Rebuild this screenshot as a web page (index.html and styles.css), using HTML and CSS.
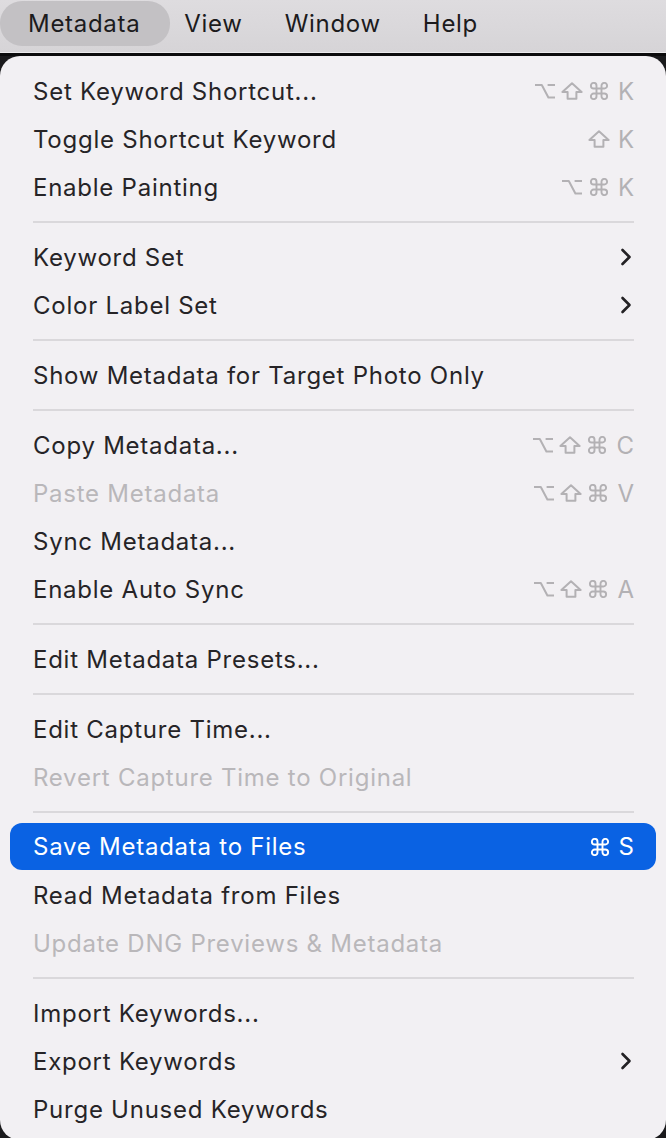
FILE: index.html
```html
<!DOCTYPE html>
<html>
<head>
<meta charset="utf-8">
<link rel="stylesheet" href="styles.css">
</head>
<body>
<svg width="0" height="0" class="defs">
  <defs>
    <symbol id="opt" viewBox="0 0 22 18"><path d="M1 3 H7.8 L14.4 15.5 H21 M13.6 3 H21" fill="none" stroke="currentColor" stroke-width="2" stroke-linejoin="round"/></symbol>
    <symbol id="shift" viewBox="0 0 22 18"><path d="M11 1.2 L20.6 10 H15.4 V16.8 H6.6 V10 H1.4 Z" fill="none" stroke="currentColor" stroke-width="2" stroke-linejoin="round"/></symbol>
    <symbol id="cmd" viewBox="0 0 22 18"><path d="M8.5 6.5 V3.7 A2.8 2.8 0 1 0 5.7 6.5 H16.3 A2.8 2.8 0 1 0 13.5 3.7 V14.3 A2.8 2.8 0 1 0 16.3 11.5 H5.7 A2.8 2.8 0 1 0 8.5 14.3 Z" fill="none" stroke="currentColor" stroke-width="1.9" stroke-linejoin="round"/></symbol>
    <symbol id="chev" viewBox="0 0 12 18"><path d="M2.5 2 L9.5 9 L2.5 16" fill="none" stroke="currentColor" stroke-width="2.6" stroke-linecap="round" stroke-linejoin="round"/></symbol>
  </defs>
</svg>
<div class="menubar">
  <span class="mb-item active">Metadata</span>
  <span class="mb-item">View</span>
  <span class="mb-item">Window</span>
  <span class="mb-item">Help</span>
</div>
<div class="gap"></div>
<div class="panel">
  <div class="row"><span class="label">Set Keyword Shortcut...</span><span class="keys"><svg class="g"><use href="#opt"/></svg><svg class="g"><use href="#shift"/></svg><svg class="g"><use href="#cmd"/></svg><span class="k">K</span></span></div>
  <div class="row"><span class="label">Toggle Shortcut Keyword</span><span class="keys"><svg class="g"><use href="#shift"/></svg><span class="k">K</span></span></div>
  <div class="row"><span class="label">Enable Painting</span><span class="keys"><svg class="g"><use href="#opt"/></svg><svg class="g"><use href="#cmd"/></svg><span class="k">K</span></span></div>
  <div class="sep"></div>
  <div class="row"><span class="label">Keyword Set</span><svg class="chev"><use href="#chev"/></svg></div>
  <div class="row"><span class="label">Color Label Set</span><svg class="chev"><use href="#chev"/></svg></div>
  <div class="sep"></div>
  <div class="row"><span class="label">Show Metadata for Target Photo Only</span></div>
  <div class="sep"></div>
  <div class="row"><span class="label">Copy Metadata...</span><span class="keys"><svg class="g"><use href="#opt"/></svg><svg class="g"><use href="#shift"/></svg><svg class="g"><use href="#cmd"/></svg><span class="k">C</span></span></div>
  <div class="row disabled"><span class="label">Paste Metadata</span><span class="keys"><svg class="g"><use href="#opt"/></svg><svg class="g"><use href="#shift"/></svg><svg class="g"><use href="#cmd"/></svg><span class="k">V</span></span></div>
  <div class="row"><span class="label">Sync Metadata...</span></div>
  <div class="row"><span class="label">Enable Auto Sync</span><span class="keys"><svg class="g"><use href="#opt"/></svg><svg class="g"><use href="#shift"/></svg><svg class="g"><use href="#cmd"/></svg><span class="k">A</span></span></div>
  <div class="sep"></div>
  <div class="row"><span class="label">Edit Metadata Presets...</span></div>
  <div class="sep"></div>
  <div class="row"><span class="label">Edit Capture Time...</span></div>
  <div class="row disabled"><span class="label">Revert Capture Time to Original</span></div>
  <div class="sep"></div>
  <div class="row selected"><span class="label">Save Metadata to Files</span><span class="keys"><svg class="g"><use href="#cmd"/></svg><span class="k">S</span></span></div>
  <div class="row"><span class="label">Read Metadata from Files</span></div>
  <div class="row disabled"><span class="label">Update DNG Previews &amp; Metadata</span></div>
  <div class="sep"></div>
  <div class="row"><span class="label">Import Keywords...</span></div>
  <div class="row"><span class="label">Export Keywords</span><svg class="chev"><use href="#chev"/></svg></div>
  <div class="row"><span class="label">Purge Unused Keywords</span></div>
</div>
</body>
</html>
```

FILE: styles.css
```css
html, body {
  margin: 0;
  padding: 0;
}
body {
  width: 666px;
  height: 1138px;
  overflow: hidden;
  background: #1a1a1c;
  font-family: Inter, "Noto Sans", "Liberation Sans", sans-serif;
  -webkit-font-smoothing: antialiased;
}
.defs {
  position: absolute;
  width: 0;
  height: 0;
}
.menubar {
  height: 53px;
  background: linear-gradient(#dedcdf, #d6d4d7);
  display: flex;
  align-items: flex-start;
  padding-top: 1px;
  border-bottom: 1px solid #ecebed;
  box-sizing: border-box;
}
.mb-item {
  font-size: 24px;
  color: #1c1b1d;
  padding: 0 21px;
  height: 45px;
  line-height: 45px;
  letter-spacing: 0.7px;
}
.mb-item.active {
  background: #c3c1c4;
  border-radius: 22px;
  padding: 0 30px 0 28px;
  margin-right: -7px;
}
.gap {
  height: 3px;
  background: #0b0b0c;
}
.panel {
  background: #f2f0f3;
  border-radius: 20px;
  padding: 11px 10px 8px 10px;
  height: 1084px;
  box-sizing: border-box;
}
.row {
  height: 48px;
  display: flex;
  align-items: center;
  justify-content: space-between;
  padding: 0 22px 0 23px;
  border-radius: 12px;
  font-size: 24px;
  letter-spacing: 0.75px;
  color: #262427;
}
.row.disabled {
  color: #b9b7ba;
}
.row.selected {
  background: #0a62e3;
  color: #ffffff;
  height: 47px;
  margin-bottom: 1px;
}
.label {
  white-space: nowrap;
}
.keys {
  display: flex;
  align-items: center;
  gap: 5px;
  color: #b3b1b4;
  font-size: 24px;
}
.row.selected .keys {
  color: #ffffff;
}
.g {
  width: 22px;
  height: 18px;
  display: block;
}
.k {
  letter-spacing: 0;
  margin-left: 3px;
}
.chev {
  width: 12px;
  height: 18px;
  display: block;
  color: #232124;
  margin-right: 2px;
}
.sep {
  height: 22px;
  display: flex;
  align-items: center;
  padding: 0 22px 0 23px;
}
.sep::before {
  content: "";
  display: block;
  flex: 1;
  height: 2px;
  background: #dad8db;
}
```
